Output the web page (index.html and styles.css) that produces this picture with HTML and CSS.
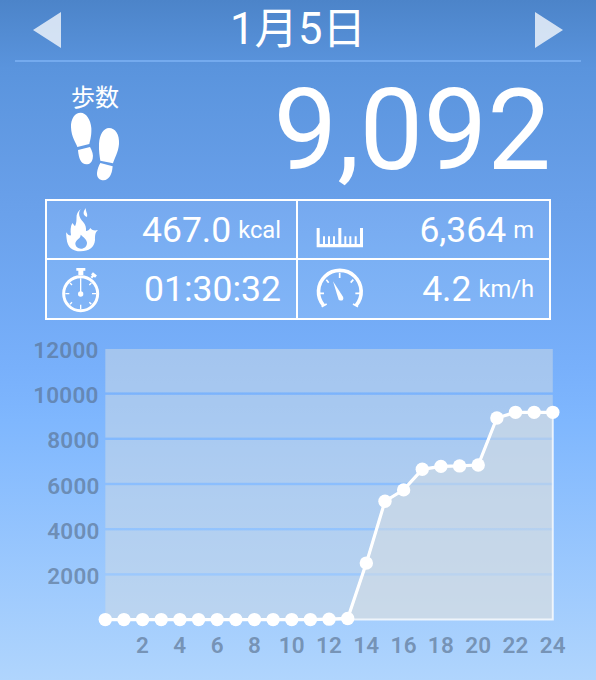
FILE: index.html
```html
<!DOCTYPE html>
<html lang="ja">
<head>
  <meta charset="UTF-8" />
  <meta name="viewport" content="width=device-width, initial-scale=1.0" />
  <title>歩数計</title>
  <link rel="stylesheet" href="styles.css">
</head>
<body>
  <header class="date-bar">
    <svg class="arrow" viewBox="0 0 28 36"><path d="M0 18L28 0V36Z" /></svg>
    <h1>1月5日</h1>
    <svg class="arrow" viewBox="0 0 28 36"><path d="M28 18L0 0V36Z" /></svg>
  </header>

  <section class="steps">
    <div class="steps-label">
      <span>歩数</span>
      <svg class="feet" viewBox="0 0 150 210">
        <path d="M32 2C48 2 62 22 64 48C65 70 61 83 58 96L22 105C18 92 4 76 3 46C2 20 15 2 32 2Z" />
        <path d="M24 114L60 105C66 116 71 128 68 140C65 151 60 156 51 157C33 158 26 140 24 114Z" />
        <path d="M117 48C136 48 149 68 147 96C145 122 133 139 129 154L91 146C89 132 86 117 87 95C89 67 101 48 117 48Z" />
        <path d="M91 153L128 163C126 188 117 204 101 205C88 205 80 196 81 183C82 171 86 162 91 153Z" />
      </svg>
    </div>
    <div class="steps-count">9,092</div>
  </section>

  <section class="stats">
    <div class="stat">
      <svg class="icon" viewBox="0 0 150 150">
        <path fill-rule="evenodd" d="M62 10C53 21 58 36 69 47C77 56 79 65 78 75C83 75 88 72 91 66C98 75 106 74 114 72C105 80 105 88 105 103C103 125 86 136 62 136C37 136 22 123 20 99C19 91 18 85 19 79C24 87 28 89 33 88C31 75 31 62 37 51L45 61C51 49 49 36 50 28C53 18 57 13 62 10ZM62 86C63 97 47 101 46 112C46 122 54 128 63 128C73 128 81 121 81 110C80 99 69 93 62 86Z" />
        <path d="M78 6C75 15 84 21 81 33C67 28 69 15 78 6Z" />
      </svg>
      <span class="value">467.0</span>
      <span class="unit">kcal</span>
    </div>
    <div class="stat">
      <svg class="icon" viewBox="0 0 150 150">
        <path d="M5 66H14V114H24V91H30V114H39V91H45V114H54V91H60V114H70V66H79V114H88V91H94V114H103V91H109V114H119V91H125V114H135V66H144V124H5Z" />
      </svg>
      <span class="value">6,364</span>
      <span class="unit">m</span>
    </div>
    <div class="stat">
      <svg class="icon" viewBox="0 0 150 150">
        <path d="M49 6H76V14H70V27H55V14H49Z" />
        <path class="line" stroke-width="7" d="M94 35L102 26" />
        <path class="line" stroke-width="9" d="M96 22L108 32" />
        <circle class="line" stroke-width="9" cx="62" cy="83" r="51" />
        <path class="line" stroke-width="4" d="M62 37V83M62 116V130M16 83H28M96 83H108M30 51L36 57M94 51L88 57M30 115L36 109M94 115L88 109" />
        <circle cx="62" cy="84" r="8" />
      </svg>
      <span class="value">01:30:32</span>
    </div>
    <div class="stat">
      <svg class="icon" viewBox="0 0 150 150">
        <path class="line" stroke-width="11" d="M26 119A64 64 0 1 1 123 119" />
        <path class="line" stroke-width="5" d="M74 20V36M34 41L41 50M115 41L107 50M10 82H27M121 82H139M20 122L35 114M129 122L114 114" />
        <path d="M54 46L84 92C88 101 80 108 71 101Z" />
      </svg>
      <span class="value">4.2</span>
      <span class="unit">km/h</span>
    </div>
  </section>

  <svg class="chart" id="chart" viewBox="0 0 596 360"></svg>

  <script>
    const data = [0, 0, 0, 0, 0, 0, 0, 0, 0, 0, 0, 0, 20, 50, 2500, 5240, 5740, 6650, 6780, 6800, 6840, 8920, 9170, 9170, 9170];
    const left = 105.3;
    const right = 552.8;
    const bottom = 299.6;
    const stepX = (right - left) / 24;
    const stepY = 45.2;

    const px = i => left + i * stepX;
    const py = v => bottom - v / 2000 * stepY;

    let out = '';

    // background bands, the gaps between them are the grid lines
    for (let i = 0; i < 6; i++) {
      const y1 = i === 5 ? 29 : py((i + 1) * 2000) + 1.2;
      const y2 = i === 0 ? bottom : py(i * 2000) - 1.2;
      out += `<rect class="band" x="${left}" y="${y1}" width="${right - left}" height="${y2 - y1}" />`;
      out += `<text class="y-label" x="${i > 3 ? 98.5 : 99.5}" y="${py((i + 1) * 2000) + 9.5}">${(i + 1) * 2000}</text>`;
    }

    const points = data.map((v, i) => `${px(i)},${py(v)}`).join(' ');
    out += `<polygon class="area" points="${points} ${right},${bottom} ${left},${bottom}" />`;
    out += `<polyline class="graph" points="${points}" />`;

    data.forEach((v, i) => {
      out += `<circle cx="${px(i)}" cy="${py(v)}" r="6.7" />`;
      if (i && i % 2 === 0) {
        out += `<text class="x-label" x="${px(i)}" y="333">${i}</text>`;
      }
    });

    document.getElementById('chart').innerHTML = out;
  </script>
</body>
</html>
```
FILE: styles.css
```css
body {
  margin: 0;
  height: 680px;
  overflow: hidden;
  background: linear-gradient(#4c84c9, #5a94dd 10%, #69a0ea 30%, #78b0fb 54%, #7fb7fe 62%, #b0d5fd);
  color: white;
  font-family: Roboto, 'Noto Sans CJK JP', sans-serif;
}

svg {
  display: block;
  fill: white;
}

.date-bar {
  display: flex;
  align-items: center;
  justify-content: space-between;
  height: 60px;
  margin: 0 15px;
  padding: 0 18px;
  border-bottom: 2px solid #74aaee;
}

.arrow {
  width: 28px;
  height: 36px;
  opacity: 0.75;
}

h1 {
  margin: 0;
  font-size: 43.5px;
  line-height: 60px;
  font-weight: 400;
}

.steps {
  display: flex;
  justify-content: space-between;
  height: 137px;
  padding: 0 45px 0 70px;
}

.steps-label {
  padding-top: 24px;
  font-size: 24px;
  line-height: 24px;
}

.steps-label span {
  display: block;
  padding-left: 1px;
}

.feet {
  width: 50px;
  height: 70px;
  margin-top: 2px;
}

.steps-count {
  font-size: 113.5px;
  line-height: 138px;
}

.stats {
  display: grid;
  grid-template-columns: 249px 251px;
  grid-template-rows: 57px 58px;
  gap: 2px;
  width: 502px;
  margin: 0 0 0 45px;
  border: 2px solid white;
  background: white;
}

.stat {
  display: flex;
  align-items: center;
  padding: 0 15px 0 13px;
  background: linear-gradient(#76a9ef, #7bb0f4);
}

.stat:nth-child(even) {
  padding: 0 15px 0 17px;
}

.stat:nth-child(n + 3) {
  background: linear-gradient(#7bb0f4, #82b5f7);
}

.icon {
  width: 50px;
  height: 50px;
  margin-top: 3px;
}

.line {
  fill: none;
  stroke: white;
}

.value {
  margin-left: auto;
  font-size: 35.5px;
}

.unit {
  margin-left: 7px;
  font-size: 23.7px;
}

.chart {
  width: 596px;
  height: 360px;
}

.band {
  fill: rgba(210, 220, 228, 0.5);
}

.area {
  fill: rgba(216, 221, 226, 0.5);
  stroke: rgba(255, 255, 255, 0.75);
  stroke-width: 2;
}

.graph {
  fill: none;
  stroke: white;
  stroke-width: 3.2;
}

.y-label,
.x-label {
  fill: rgba(88, 111, 140, 0.65);
  font-size: 22.5px;
  font-weight: 600;
  letter-spacing: 0.2px;
}

.y-label {
  text-anchor: end;
}

.x-label {
  text-anchor: middle;
}
```
